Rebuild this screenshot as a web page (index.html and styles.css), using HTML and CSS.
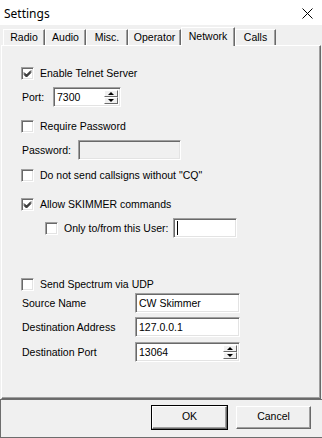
FILE: index.html
```html
<!DOCTYPE html>
<html>
<head>
<meta charset="utf-8">
<link rel="stylesheet" href="styles.css">
</head>
<body>
<div class="window">
  <div class="titlebar">
    <span class="title">Settings</span>
    <svg class="close" width="11" height="11" viewBox="0 0 11 11"><path d="M0.5 0.5 L10.5 10.5 M10.5 0.5 L0.5 10.5" stroke="#000" stroke-width="1" fill="none"/></svg>
  </div>
  <div class="tabs">
    <div class="tab w-radio">Radio</div>
    <div class="tab w-audio">Audio</div>
    <div class="tab w-misc">Misc.</div>
    <div class="tab w-oper">Operator</div>
    <div class="tab selected w-net">Network</div>
    <div class="tab w-calls">Calls</div>
  </div>
  <div class="panel">
    <div class="row check r1">
      <span class="cb"><svg width="9" height="9" viewBox="0 0 9 9"><path d="M1 3.5 L3.5 6 L8 1.5 M1 4.5 L3.5 7 L8 2.5 M1 5.5 L3.5 8 L8 3.5" stroke="#000" stroke-width="1" fill="none"/></svg></span>
      <span class="lbl">Enable Telnet Server</span>
    </div>
    <div class="row field r2">
      <span class="flabel w-port">Port:</span>
      <div class="edit spin port"><span class="val">7300</span>
        <span class="spinbtns"><span class="sb up"><i class="arr-up"></i></span><span class="sb down"><i class="arr-down"></i></span></span>
      </div>
    </div>
    <div class="row check r3">
      <span class="cb"></span>
      <span class="lbl">Require Password</span>
    </div>
    <div class="row field r4">
      <span class="flabel w-pass">Password:</span>
      <div class="edit disabled pass"></div>
    </div>
    <div class="row check r5">
      <span class="cb"></span>
      <span class="lbl">Do not send callsigns without "CQ"</span>
    </div>
    <div class="row check r6">
      <span class="cb"><svg width="9" height="9" viewBox="0 0 9 9"><path d="M1 3.5 L3.5 6 L8 1.5 M1 4.5 L3.5 7 L8 2.5 M1 5.5 L3.5 8 L8 3.5" stroke="#000" stroke-width="1" fill="none"/></svg></span>
      <span class="lbl">Allow SKIMMER commands</span>
    </div>
    <div class="row field r7">
      <span class="cb"></span>
      <span class="lbl">Only to/from this User:</span>
      <div class="edit user"><span class="caret"></span></div>
    </div>
    <div class="row check r8">
      <span class="cb"></span>
      <span class="lbl">Send Spectrum via UDP</span>
    </div>
    <div class="row field r9">
      <span class="flabel w-udp">Source Name</span>
      <div class="edit udp"><span class="val">CW Skimmer</span></div>
    </div>
    <div class="row field r10">
      <span class="flabel w-udp">Destination Address</span>
      <div class="edit udp"><span class="val">127.0.0.1</span></div>
    </div>
    <div class="row field r11">
      <span class="flabel w-udp">Destination Port</span>
      <div class="edit spin udp"><span class="val">13064</span>
        <span class="spinbtns"><span class="sb up"><i class="arr-up"></i></span><span class="sb down"><i class="arr-down"></i></span></span>
      </div>
    </div>
  </div>
  <div class="footer">
    <div class="btn default">OK</div>
    <div class="btn">Cancel</div>
  </div>
</div>
</body>
</html>
```
FILE: styles.css
```css
html, body {
  margin: 0;
  padding: 0;
}
body {
  width: 322px;
  height: 438px;
  overflow: hidden;
  background: #f0f0f0;
  font-family: "Liberation Sans", Arial, sans-serif;
  font-size: 10.5px;
  color: #000;
}
.window {
  width: 322px;
  height: 438px;
  display: flex;
  flex-direction: column;
}
.titlebar {
  height: 25px;
  background: #fff;
  display: flex;
  align-items: center;
  justify-content: space-between;
  padding: 0 9px 0 4px;
  flex: none;
}
.title {
  font-family: "Noto Sans", "Open Sans", sans-serif;
  font-size: 12px;
  margin-top: 1px;
}
.close {
  display: block;
  margin-top: 1px;
}
.tabs {
  display: flex;
  align-items: flex-end;
  height: 18px;
  margin-top: 2px;
  padding-left: 3px;
  flex: none;
}
.tab {
  box-sizing: border-box;
  height: 16px;
  line-height: 15px;
  text-align: center;
  border-top: 1px solid #fff;
  border-left: 1px solid #fff;
  border-right: 1px solid #696969;
  box-shadow: inset -1px 0 #a0a0a0;
  background: #f0f0f0;
  padding-top: 0;
}
.tab.selected {
  height: 19px;
  margin-bottom: -1px;
  line-height: 16px;
  position: relative;
  z-index: 1;
  padding-bottom: 2px;
}
.w-radio { width: 42px; }
.w-audio { width: 41px; }
.w-misc { width: 42px; }
.w-oper { width: 53px; }
.w-net { width: 54px; }
.w-calls { width: 41px; }

.panel {
  box-sizing: border-box;
  margin-left: 1px;
  width: 320px;
  height: 354px;
  flex: none;
  border-top: 1px solid #fff;
  border-left: 1px solid #fff;
  border-right: 1px solid #696969;
  border-bottom: 1px solid #696969;
  box-shadow: inset -1px -1px #a0a0a0;
  padding-left: 19px;
  display: flex;
  flex-direction: column;
}
.row {
  display: flex;
  align-items: center;
}
.row.check {
  height: 13px;
  line-height: 13px;
}
.row.field {
  height: 20px;
}
.cb {
  box-sizing: border-box;
  width: 13px;
  height: 13px;
  background: #fff;
  border: 1px solid;
  border-color: #a0a0a0 #fff #fff #a0a0a0;
  box-shadow: inset 1px 1px #696969, inset -1px -1px #e3e3e3;
  display: flex;
  align-items: center;
  justify-content: center;
  flex: none;
}
.cb svg { display: block; margin: 0 0 0 0; }
.lbl {
  margin-left: 6px;
  white-space: nowrap;
}
.flabel {
  white-space: nowrap;
  flex: none;
  padding-left: 1px;
}
.w-port { width: 31px; }
.w-pass { width: 56px; }
.w-udp { width: 113px; }

.edit {
  box-sizing: border-box;
  height: 20px;
  background: #fff;
  border: 1px solid;
  border-color: #a0a0a0 #fff #fff #a0a0a0;
  box-shadow: inset 1px 1px #696969, inset -1px -1px #e3e3e3;
  display: flex;
  align-items: center;
  padding-left: 3px;
  position: relative;
  flex: none;
}
.edit .val {
  line-height: 14px;
}
.edit.disabled {
  background: #f0f0f0;
}
.port { width: 68px; }
.pass { width: 103px; }
.udp { width: 105px; }
.user { width: 64px; margin-left: 5px; }
.caret {
  display: block;
  width: 1px;
  height: 14px;
  background: #000;
  margin-left: 0;
}
.spin .spinbtns {
  position: absolute;
  right: 2px;
  top: 2px;
  bottom: 2px;
  width: 14px;
  display: flex;
  flex-direction: column;
}
.sb {
  flex: 1;
  box-sizing: border-box;
  background: #f0f0f0;
  border: 1px solid;
  border-color: #fff #696969 #696969 #fff;
  display: flex;
  align-items: center;
  justify-content: center;
}
.arr-up, .arr-down {
  display: block;
  width: 0;
  height: 0;
  border-left: 3px solid transparent;
  border-right: 3px solid transparent;
}
.arr-up { border-bottom: 3px solid #000; }
.arr-down { border-top: 3px solid #000; }

.r1 { margin-top: 21px; }
.r2 { margin-top: 7px; }
.r3 { margin-top: 13px; }
.r4 { margin-top: 7px; }
.r5 { margin-top: 9px; }
.r6 { margin-top: 16px; }
.r7 { margin-top: 7px; padding-left: 24px; }
.r8 { margin-top: 40px; }
.r9 { margin-top: 2px; }
.r10 { margin-top: 4px; }
.r11 { margin-top: 5px; }

.footer {
  flex: 1;
  box-sizing: border-box;
  border-top: 1px solid #6d6d6d;
  border-left: 1px solid #6d6d6d;
  border-bottom: 1px solid #6d6d6d;
  display: flex;
  justify-content: flex-end;
  align-items: flex-start;
  gap: 9px;
  padding: 6px 11px 0 0;
}
.btn {
  box-sizing: border-box;
  width: 75px;
  height: 23px;
  line-height: 19px;
  text-align: center;
  background: #f0f0f0;
  border: 1px solid;
  border-color: #fff #696969 #696969 #fff;
  box-shadow: inset -1px -1px #a0a0a0;
}
.btn.default {
  outline: 1px solid #000;
  outline-offset: 0;
}
```
